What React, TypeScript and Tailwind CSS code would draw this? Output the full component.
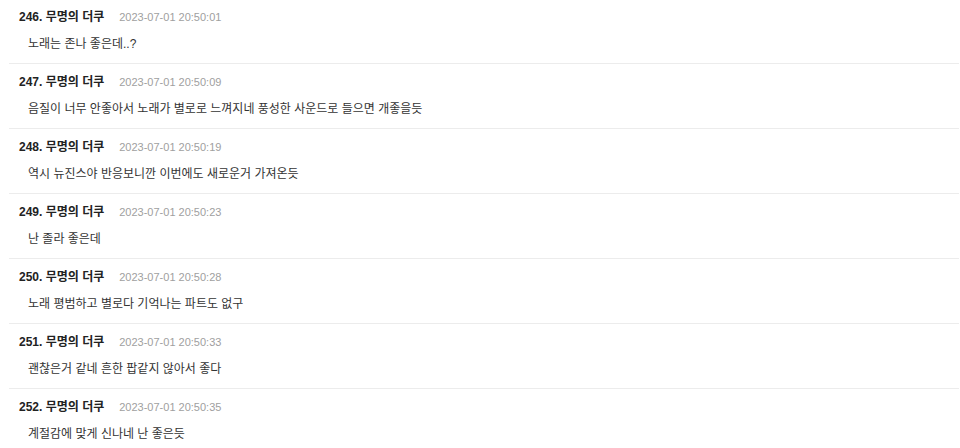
const comments = [
  { no: 246, time: "2023-07-01 20:50:01", text: "노래는 존나 좋은데..?" },
  { no: 247, time: "2023-07-01 20:50:09", text: "음질이 너무 안좋아서 노래가 별로로 느껴지네 풍성한 사운드로 들으면 개좋을듯" },
  { no: 248, time: "2023-07-01 20:50:19", text: "역시 뉴진스야 반응보니깐 이번에도 새로운거 가져온듯" },
  { no: 249, time: "2023-07-01 20:50:23", text: "난 졸라 좋은데" },
  { no: 250, time: "2023-07-01 20:50:28", text: "노래 평범하고 별로다 기억나는 파트도 없구" },
  { no: 251, time: "2023-07-01 20:50:33", text: "괜찮은거 같네 흔한 팝같지 않아서 좋다" },
  { no: 252, time: "2023-07-01 20:50:35", text: "계절감에 맞게 신나네 난 좋은듯" },
];

export default function App() {
  return (
    <div
      className="w-[960px] h-[448px] overflow-hidden bg-white pl-[9px] pr-px"
      style={{ fontFamily: '"Liberation Sans", "Noto Sans CJK KR", sans-serif' }}
    >
      {comments.map((c) => (
        <div
          key={c.no}
          className="border-b border-[#ececec] pt-[10px] pb-[11px] first:pt-[9px]"
        >
          {/* header */}
          <div className="flex items-center h-4 pl-[10px]">
            <span className="text-[12px] font-bold text-[#222]">
              {c.no}. 무명의 더쿠
            </span>
            <span className="ml-[15px] text-[11px] text-[#a0a0a0]">{c.time}</span>
          </div>
          {/* body */}
          <div className="mt-[11px] h-4 flex items-center pl-[19px] text-[12px] text-[#333]">
            {c.text}
          </div>
        </div>
      ))}
    </div>
  );
}
